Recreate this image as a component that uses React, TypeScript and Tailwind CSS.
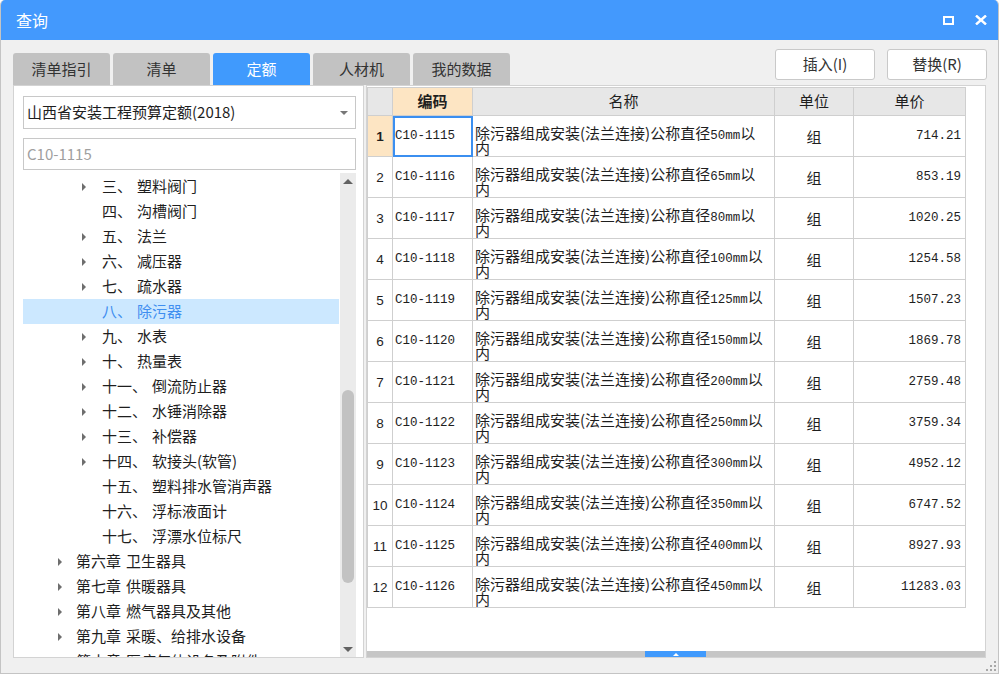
import React from "react";

type TreeItem = {
  label: string;
  name: string;
  level: 2 | 3;
  arrow: boolean;
  active?: boolean;
};

const treeItems: TreeItem[] = [
  { label: "三、", name: "塑料阀门", level: 3, arrow: true },
  { label: "四、", name: "沟槽阀门", level: 3, arrow: false },
  { label: "五、", name: "法兰", level: 3, arrow: true },
  { label: "六、", name: "减压器", level: 3, arrow: true },
  { label: "七、", name: "疏水器", level: 3, arrow: true },
  { label: "八、", name: "除污器", level: 3, arrow: false, active: true },
  { label: "九、", name: "水表", level: 3, arrow: true },
  { label: "十、", name: "热量表", level: 3, arrow: true },
  { label: "十一、", name: "倒流防止器", level: 3, arrow: true },
  { label: "十二、", name: "水锤消除器", level: 3, arrow: true },
  { label: "十三、", name: "补偿器", level: 3, arrow: true },
  { label: "十四、", name: "软接头(软管)", level: 3, arrow: true },
  { label: "十五、", name: "塑料排水管消声器", level: 3, arrow: false },
  { label: "十六、", name: "浮标液面计", level: 3, arrow: false },
  { label: "十七、", name: "浮漂水位标尺", level: 3, arrow: false },
  { label: "第六章", name: "卫生器具", level: 2, arrow: true },
  { label: "第七章", name: "供暖器具", level: 2, arrow: true },
  { label: "第八章", name: "燃气器具及其他", level: 2, arrow: true },
  { label: "第九章", name: "采暖、给排水设备", level: 2, arrow: true },
  { label: "第十章", name: "医疗气体设备及附件", level: 2, arrow: true },
];

const rows = [
  { code: "C10-1115", size: "50", price: "714.21" },
  { code: "C10-1116", size: "65", price: "853.19" },
  { code: "C10-1117", size: "80", price: "1020.25" },
  { code: "C10-1118", size: "100", price: "1254.58" },
  { code: "C10-1119", size: "125", price: "1507.23" },
  { code: "C10-1120", size: "150", price: "1869.78" },
  { code: "C10-1121", size: "200", price: "2759.48" },
  { code: "C10-1122", size: "250", price: "3759.34" },
  { code: "C10-1123", size: "300", price: "4952.12" },
  { code: "C10-1124", size: "350", price: "6747.52" },
  { code: "C10-1125", size: "400", price: "8927.93" },
  { code: "C10-1126", size: "450", price: "11283.03" },
];

const tabs = ["清单指引", "清单", "定额", "人材机", "我的数据"];

const Arrow = () => (
  <span className="block w-0 h-0 border-y-[4px] border-y-transparent border-l-[4px] border-l-[#6e6e6e]" />
);

const TreeRow = ({ item }: { item: TreeItem }) => (
  <div
    className={`flex items-center h-[25px] whitespace-nowrap ${
      item.active ? "bg-[#cce8ff] text-[#3f8ef0]" : "text-[#1e1e1e]"
    } ${item.level === 3 ? "pl-[59px]" : "pl-[35px]"}`}
  >
    <span className={`flex items-center ${item.level === 3 ? "w-[20px]" : "w-[18px]"}`}>
      {item.arrow && <Arrow />}
    </span>
    <span>{item.label}</span>
    <span className="ml-[5px]">{item.name}</span>
  </div>
);

export default function App() {
  return (
    <div
      className="w-[999px] h-[674px] flex flex-col bg-[#f0f0f0] border-x border-b border-[#c4c4c4] rounded-t-[5px] overflow-hidden text-[15px]"
      style={{ fontFamily: '"Noto Sans CJK SC", "Noto Sans", sans-serif' }}
    >
      {/* title bar */}
      <div className="h-[40px] shrink-0 bg-[#4399fd] flex items-center justify-between pl-[15px] pr-[11px] text-white">
        <span className="text-[16px]">查询</span>
        <div className="flex items-center gap-[21px]">
          <span className="block w-[11px] h-[9px] border-[2px] border-white" />
          <svg width="12" height="10" viewBox="0 0 12 10">
            <path d="M1 0.5 L11 9.5 M11 0.5 L1 9.5" stroke="white" strokeWidth="2.4" />
          </svg>
        </div>
      </div>

      {/* tabs + buttons */}
      <div className="h-[45px] shrink-0 flex justify-between pl-[12px] pr-[11px]">
        <div className="flex items-end gap-[3px]">
          {tabs.map((t) => (
            <div
              key={t}
              className={`w-[97px] h-[32px] flex items-center justify-center rounded-t-[3px] ${
                t === "定额" ? "bg-[#409afd] text-white" : "bg-[#c2c2c2] text-[#333]"
              }`}
            >
              {t}
            </div>
          ))}
        </div>
        <div className="flex gap-[12px] mt-[9px]">
          <button className="w-[100px] h-[31px] bg-white border border-[#c9c9c9] rounded-[3px] text-[#333]">
            插入(I)
          </button>
          <button className="w-[100px] h-[31px] bg-white border border-[#c9c9c9] rounded-[3px] text-[#333]">
            替换(R)
          </button>
        </div>
      </div>

      {/* main */}
      <div className="h-[573px] shrink-0 flex pl-[12px] gap-[2px]">
        {/* left panel */}
        <div className="w-[351px] bg-white border border-[#d3d3d3] flex flex-col">
          <div className="ml-[9px] mt-[10px] w-[333px] h-[33px] border border-[#c8c8c8] flex items-center justify-between pl-[3px] pr-[7px] text-[#1e1e1e]">
            <span>山西省安装工程预算定额(2018)</span>
            <span className="block w-0 h-0 border-x-[4px] border-x-transparent border-t-[4px] border-t-[#777]" />
          </div>
          <div className="ml-[9px] mt-[9px] w-[333px] h-[32px] border border-[#c8c8c8] flex items-center pl-[3px] text-[#a0a0a0]">
            C10-1115
          </div>
          <div className="ml-[9px] mt-[3px] flex flex-1 min-h-0 w-[333px]">
            <div className="flex-1 overflow-hidden pt-[1px]">
              {treeItems.map((it) => (
                <TreeRow key={it.label} item={it} />
              ))}
            </div>
            <div className="w-[16px] ml-[1px] bg-[#ebebeb] flex flex-col items-center">
              <div className="h-[16px] flex items-center justify-center">
                <span className="block w-0 h-0 border-x-[5px] border-x-transparent border-b-[5px] border-b-[#626262]" />
              </div>
              <div className="h-[201px]" />
              <div className="w-[12px] h-[193px] bg-[#c2c2c2] rounded-full" />
              <div className="flex-1" />
              <div className="h-[16px] flex items-center justify-center">
                <span className="block w-0 h-0 border-x-[5px] border-x-transparent border-t-[5px] border-t-[#626262]" />
              </div>
            </div>
          </div>
        </div>

        {/* right panel */}
        <div className="w-[620px] bg-white border border-[#d3d3d3] flex flex-col">
          <div className="mt-[1px] w-[599px] border-l border-t border-[#cfcfcf] text-[#1e1e1e]">
            <div className="flex h-[28px] bg-[#e7e7e7]">
              <div className="w-[25px] border-r border-b border-[#cfcfcf]" />
              <div className="w-[80px] border-r border-b border-[#cfcfcf] bg-[#fde5c3] flex items-center justify-center font-bold">
                编码
              </div>
              <div className="w-[302px] border-r border-b border-[#cfcfcf] flex items-center justify-center">
                名称
              </div>
              <div className="w-[79px] border-r border-b border-[#cfcfcf] flex items-center justify-center">
                单位
              </div>
              <div className="w-[112px] border-r border-b border-[#cfcfcf] flex items-center justify-center">
                单价
              </div>
            </div>
            {rows.map((r, i) => (
              <div key={r.code} className="flex h-[41px]">
                <div
                  className={`w-[25px] border-r border-b border-[#cfcfcf] flex items-center justify-center pt-[2px] text-[13.5px] ${
                    i === 0 ? "bg-[#fde5c3] font-bold" : ""
                  }`}
                  style={{ fontFamily: '"Liberation Sans", sans-serif' }}
                >
                  {i + 1}
                </div>
                <div
                  className={`w-[80px] border-r border-b border-[#cfcfcf] flex items-center pl-[2px] text-[12.5px] ${
                    i === 0 ? "outline-[2px] outline-[#3b8ff0] -outline-offset-2" : ""
                  }`}
                  style={{ fontFamily: '"Liberation Mono", monospace' }}
                >
                  {r.code}
                </div>
                <div className="w-[302px] border-r border-b border-[#cfcfcf] pl-[2px] pt-[11px] leading-[12px] whitespace-nowrap overflow-hidden">
                  <div>
                    除污器组成安装(法兰连接)公称直径
                    <span
                      className="text-[12.5px]"
                      style={{ fontFamily: '"Liberation Mono", monospace' }}
                    >
                      {r.size}mm
                    </span>
                    以
                  </div>
                  <div>内</div>
                </div>
                <div className="w-[79px] border-r border-b border-[#cfcfcf] flex items-center justify-center pt-[2px]">
                  组
                </div>
                <div
                  className="w-[112px] border-r border-b border-[#cfcfcf] flex items-center justify-end pr-[4px] text-[12.5px]"
                  style={{ fontFamily: '"Liberation Mono", monospace' }}
                >
                  {r.price}
                </div>
              </div>
            ))}
          </div>
          <div className="flex-1" />
          <div className="h-[6px] bg-[#c6c6c6] flex">
            <div className="w-[278px]" />
            <div className="w-[61px] bg-[#409afd] flex items-center justify-center">
              <span className="block w-0 h-0 border-x-[3px] border-x-transparent border-b-[3px] border-b-white" />
            </div>
          </div>
        </div>
      </div>

      {/* bottom strip */}
      <div className="flex-1 flex justify-end items-end pr-[2px] pb-[2px]">
        <svg width="10" height="10" viewBox="0 0 10 10">
          <rect x="8" y="0" width="2" height="2" fill="#a8a8a8" />
          <rect x="8" y="4" width="2" height="2" fill="#a8a8a8" />
          <rect x="4" y="4" width="2" height="2" fill="#a8a8a8" />
          <rect x="8" y="8" width="2" height="2" fill="#a8a8a8" />
          <rect x="4" y="8" width="2" height="2" fill="#a8a8a8" />
          <rect x="0" y="8" width="2" height="2" fill="#a8a8a8" />
        </svg>
      </div>
    </div>
  );
}
